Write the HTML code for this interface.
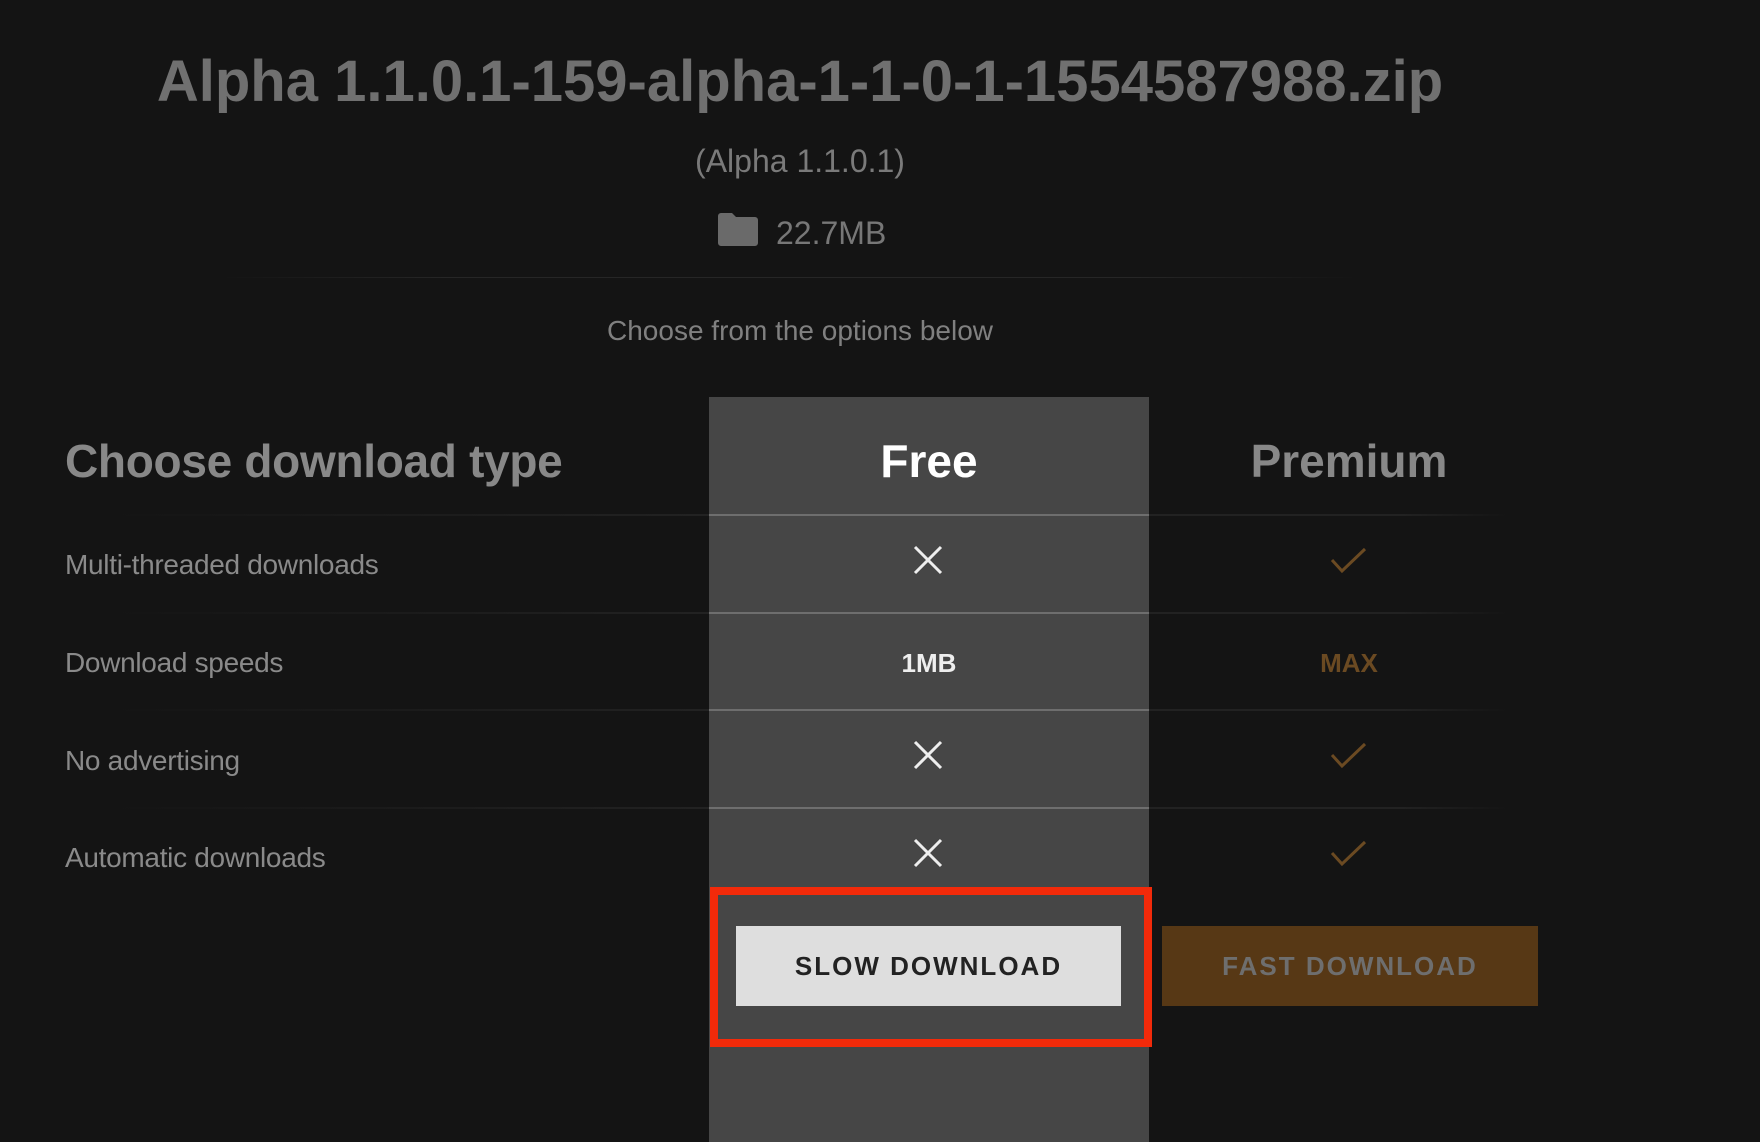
<!DOCTYPE html>
<html><head><meta charset="utf-8"><style>
html,body{margin:0;padding:0;background:#141414;}
body{width:1760px;height:1142px;position:relative;overflow:hidden;font-family:"Liberation Sans",Arial,sans-serif;}
.a{position:absolute;white-space:nowrap;}
.c{text-align:center;}
.lbl{left:65px;font-size:28px;color:#8a8a8a;letter-spacing:-0.3px;}
.line{position:absolute;height:2px;}
.x{position:absolute;width:30px;height:30px;}
</style></head><body>
<div class="a c" style="left:0;width:1600px;top:48px;font-size:58px;font-weight:bold;color:#707070;">Alpha 1.1.0.1-159-alpha-1-1-0-1-1554587988.zip</div>
<div class="a c" style="left:0;width:1600px;top:143px;font-size:32px;color:#7a7a7a;">(Alpha 1.1.0.1)</div>
<svg class="a" style="left:718px;top:213px" width="40" height="33" viewBox="0 0 40 33"><path d="M3 0h11l4 4h19a3 3 0 0 1 3 3v23a3 3 0 0 1-3 3H3a3 3 0 0 1-3-3V3a3 3 0 0 1 3-3z" fill="#6a6a6a"/></svg>
<div class="a" style="left:776px;top:215px;font-size:32px;color:#777;">22.7MB</div>
<div class="line" style="left:220px;width:1140px;top:277px;height:1px;background:linear-gradient(90deg,#141414,#262626 20%,#262626 80%,#141414);"></div>
<div class="a c" style="left:0;width:1600px;top:315px;font-size:28px;color:#808080;">Choose from the options below</div>

<div class="a" style="left:709px;top:397px;width:440px;height:745px;background:#464646;"></div>

<div class="a" style="left:65px;top:434px;font-size:46px;font-weight:bold;color:#888;letter-spacing:-0.3px;">Choose download type</div>
<div class="a c" style="left:709px;width:440px;top:434px;font-size:46px;font-weight:bold;color:#fff;">Free</div>
<div class="a c" style="left:1149px;width:400px;top:434px;font-size:46px;font-weight:bold;color:#888;">Premium</div>

<div class="line" style="left:100px;width:609px;top:514px;background:linear-gradient(90deg,#141414,#222);"></div>
<div class="line" style="left:709px;width:440px;top:514px;background:#6e6e6e;"></div>
<div class="line" style="left:1149px;width:360px;top:514px;background:linear-gradient(90deg,#222 70%,#141414);"></div>
<div class="line" style="left:100px;width:609px;top:612px;background:linear-gradient(90deg,#141414,#222);"></div>
<div class="line" style="left:709px;width:440px;top:612px;background:#6e6e6e;"></div>
<div class="line" style="left:1149px;width:360px;top:612px;background:linear-gradient(90deg,#222 70%,#141414);"></div>
<div class="line" style="left:100px;width:609px;top:709px;background:linear-gradient(90deg,#141414,#222);"></div>
<div class="line" style="left:709px;width:440px;top:709px;background:#6e6e6e;"></div>
<div class="line" style="left:1149px;width:360px;top:709px;background:linear-gradient(90deg,#222 70%,#141414);"></div>
<div class="line" style="left:100px;width:609px;top:807px;background:linear-gradient(90deg,#141414,#222);"></div>
<div class="line" style="left:709px;width:440px;top:807px;background:#6e6e6e;"></div>
<div class="line" style="left:1149px;width:360px;top:807px;background:linear-gradient(90deg,#222 70%,#141414);"></div>

<div class="a lbl" style="top:549px;">Multi-threaded downloads</div>
<div class="a lbl" style="top:647px;">Download speeds</div>
<div class="a lbl" style="top:745px;">No advertising</div>
<div class="a lbl" style="top:842px;">Automatic downloads</div>

<svg class="x" style="left:913px;top:545px"><path d="M2 2L28 28M28 2L2 28" stroke="#eee" stroke-width="3"/></svg>
<div class="a c" style="left:709px;width:440px;top:648px;font-size:26px;font-weight:bold;color:#eee;">1MB</div>
<svg class="x" style="left:913px;top:740px"><path d="M2 2L28 28M28 2L2 28" stroke="#eee" stroke-width="3"/></svg>
<svg class="x" style="left:913px;top:838px"><path d="M2 2L28 28M28 2L2 28" stroke="#eee" stroke-width="3"/></svg>

<svg class="a" style="left:1330px;top:546px" width="38" height="30"><path d="M2 14L12 25L35 3" fill="none" stroke="#6b4a22" stroke-width="3"/></svg>
<div class="a c" style="left:1149px;width:400px;top:648px;font-size:26px;font-weight:bold;color:#6b4a22;">MAX</div>
<svg class="a" style="left:1330px;top:741px" width="38" height="30"><path d="M2 14L12 25L35 3" fill="none" stroke="#6b4a22" stroke-width="3"/></svg>
<svg class="a" style="left:1330px;top:839px" width="38" height="30"><path d="M2 14L12 25L35 3" fill="none" stroke="#6b4a22" stroke-width="3"/></svg>

<div class="a" style="left:710px;top:887px;width:426px;height:144px;border:8px solid #f22a0a;"></div>
<div class="a c" style="left:736px;top:926px;width:385px;height:80px;line-height:80px;background:#dedede;color:#222;font-size:26px;font-weight:bold;letter-spacing:2px;">SLOW DOWNLOAD</div>
<div class="a c" style="left:1162px;top:926px;width:376px;height:80px;line-height:80px;background:#573815;color:#6e6e6e;font-size:26px;font-weight:bold;letter-spacing:2px;">FAST DOWNLOAD</div>
</body></html>
